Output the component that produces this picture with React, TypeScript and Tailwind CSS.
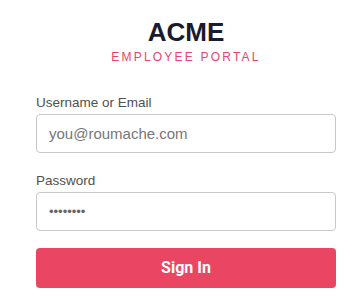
import React from 'react';

const App: React.FC = () => {
  return (
    <div className="min-h-screen bg-white" style={{ fontFamily: '"Liberation Sans", Arial, sans-serif' }}>
      <div className="w-[300px] ml-[36px] pt-[17px]">
        {/* Brand */}
        <div className="flex flex-col items-center">
          <h1 className="text-[26px] leading-[30px] font-bold text-[#1b1a2e]">ACME</h1>
          <p className="mt-[3px] text-[12px] leading-[14px] tracking-[2.2px] text-[#e8456a]">EMPLOYEE PORTAL</p>
        </div>

        {/* Form */}
        <form className="mt-[31px] flex flex-col" onSubmit={(e) => e.preventDefault()}>
          <label className="text-[13.5px] leading-[16px] text-[#505050]">Username or Email</label>
          <input
            type="text"
            placeholder="you@roumache.com"
            className="mt-[3px] h-[39px] w-full rounded-[4px] border border-[#c8c8c8] px-[12px] text-[15px] text-[#333] placeholder:text-[#777] outline-none"
          />

          <label className="mt-[20px] text-[13.5px] leading-[16px] text-[#505050]">Password</label>
          <input
            type="password"
            defaultValue="password"
            className="mt-[3px] h-[39px] w-full rounded-[4px] border border-[#c8c8c8] px-[12px] text-[13px] text-[#666] outline-none"
          />

          <button
            type="submit"
            className="mt-[17px] h-[40px] w-full rounded-[4px] bg-[#ea4563] text-[16px] font-bold text-white"
            style={{ fontFamily: 'Roboto, "Liberation Sans", sans-serif' }}
          >
            Sign In
          </button>
        </form>
      </div>
    </div>
  );
};

export default App;
